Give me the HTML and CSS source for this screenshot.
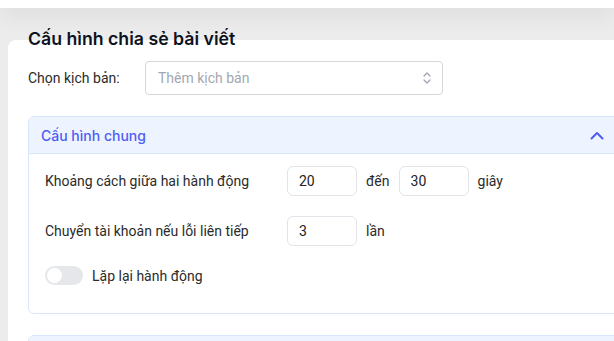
FILE: index.html
```html
<!DOCTYPE html>
<html lang="vi">
<head>
    <meta charset="UTF-8">
    <meta name="viewport" content="width=device-width, initial-scale=1.0">
    <title>Cấu hình chia sẻ bài viết</title>
    <link rel="stylesheet" href="styles.css">
</head>
<body>

<div class="topbar"></div>

<div class="page">
    <h1 class="page-title">Cấu hình chia sẻ bài viết</h1>

    <div class="card">
        <div class="script-row">
            <span class="script-label">Chọn kịch bản:</span>
            <div class="select">
                <span class="placeholder">Thêm kịch bản</span>
                <svg class="select-icon" width="10" height="14" viewBox="0 0 10 14" fill="none" stroke="#9ca3af" stroke-width="1.2" stroke-linecap="round" stroke-linejoin="round">
                    <path d="M2 5 L5 2 L8 5"/>
                    <path d="M2 9 L5 12 L8 9"/>
                </svg>
            </div>
        </div>

        <div class="panel">
            <div class="panel-header">
                <span>Cấu hình chung</span>
                <svg width="14" height="9" viewBox="0 0 14 9" fill="none" stroke="#4f5df5" stroke-width="2" stroke-linecap="round" stroke-linejoin="round">
                    <path d="M1.5 7.5 L7 2 L12.5 7.5"/>
                </svg>
            </div>
            <div class="panel-body">
                <div class="field">
                    <span class="field-label">Khoảng cách giữa hai hành động</span>
                    <input class="num" type="text" value="20">
                    <span>đến</span>
                    <input class="num" type="text" value="30">
                    <span>giây</span>
                </div>
                <div class="field">
                    <span class="field-label">Chuyển tài khoản nếu lỗi liên tiếp</span>
                    <input class="num" type="text" value="3">
                    <span>lần</span>
                </div>
                <div class="field field-switch">
                    <span class="switch"><span class="knob"></span></span>
                    <span>Lặp lại hành động</span>
                </div>
            </div>
        </div>

        <div class="panel">
            <div class="panel-header"></div>
        </div>
    </div>
</div>

</body>
</html>
```

FILE: styles.css
```css
body {
    margin: 0;
    background: #ececec;
    font-family: Roboto, "Noto Sans", sans-serif;
    font-size: 14px;
    color: #2b2b2b;
    overflow: hidden;
}
.topbar {
    height: 8px;
    background: #fff;
    box-shadow: 0 3px 24px rgba(0, 0, 0, 0.16);
    position: relative;
    z-index: 2;
}
.page {
    padding: 19px 0 0 8px;
}
.page-title {
    position: relative;
    z-index: 1;
    margin: 0 0 -11px 20px;
    font-family: Inter, sans-serif;
    font-size: 17.7px;
    font-weight: 600;
    line-height: 24px;
    color: #0d1220;
}
.card {
    width: 592px;
    background: #fff;
    border-radius: 8px 0 0 0;
    padding: 21px 28px 20px 20px;
}
.script-row {
    display: flex;
    align-items: center;
}
.script-label {
    width: 117px;
}
.select {
    width: 298px;
    height: 34px;
    box-sizing: border-box;
    border: 1px solid #d4d7dc;
    border-radius: 4px;
    display: flex;
    align-items: center;
    justify-content: space-between;
    padding: 0 10px 0 12px;
}
.placeholder {
    color: #a3a8b0;
}
.panel {
    margin-top: 21px;
    border: 1px solid #d8e6fb;
    border-radius: 6px;
    overflow: hidden;
}
.panel-header {
    height: 36px;
    background: #eef4ff;
    border-bottom: 1px solid #d8e6fb;
    display: flex;
    align-items: center;
    justify-content: space-between;
    padding: 0 15px 0 12px;
    font-family: Inter, sans-serif;
    font-weight: 500;
    color: #4f5df5;
}
.panel-body {
    padding: 12px 16px 28px;
    display: flex;
    flex-direction: column;
    gap: 20px;
}
.field {
    display: flex;
    align-items: center;
    gap: 9px;
    height: 30px;
}
.field-switch {
    height: 19px;
}
.field-label {
    width: 233px;
}
.num {
    width: 70px;
    height: 30px;
    box-sizing: border-box;
    border: 1px solid #e1e4e9;
    border-radius: 6px;
    padding: 0 11px;
    font: inherit;
    color: #222;
    outline: none;
}
.switch {
    width: 38px;
    height: 19px;
    border-radius: 10px;
    background: #e5e7eb;
    display: flex;
    align-items: center;
    padding-left: 2px;
    box-sizing: border-box;
}
.knob {
    width: 15px;
    height: 15px;
    border-radius: 50%;
    background: #fff;
}
```
